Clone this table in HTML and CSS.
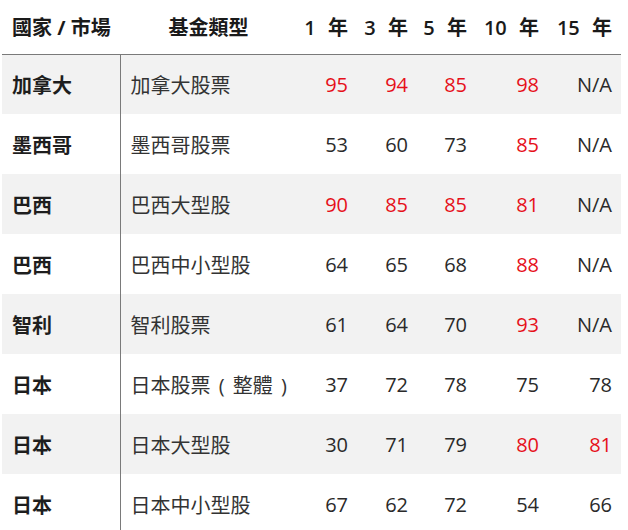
FILE: index.html
```html
<!DOCTYPE html>
<html lang="zh-Hant">
<head>
<meta charset="utf-8">
<link rel="stylesheet" href="styles.css">
</head>
<body>
<table class="funds">
  <colgroup>
    <col class="c-country"><col class="c-type"><col class="c-y1"><col class="c-y3"><col class="c-y5"><col class="c-y10"><col class="c-y15">
  </colgroup>
  <thead>
    <tr>
      <th class="country">國家 / 市場</th>
      <th class="type-h">基金類型</th>
      <th class="num">1 年</th>
      <th class="num">3 年</th>
      <th class="num">5 年</th>
      <th class="num">10 年</th>
      <th class="num">15 年</th>
    </tr>
  </thead>
  <tbody>
    <tr class="shade">
      <td class="country">加拿大</td><td class="type">加拿大股票</td>
      <td class="num hi">95</td><td class="num hi">94</td><td class="num hi">85</td><td class="num hi">98</td><td class="num">N/A</td>
    </tr>
    <tr>
      <td class="country">墨西哥</td><td class="type">墨西哥股票</td>
      <td class="num">53</td><td class="num">60</td><td class="num">73</td><td class="num hi">85</td><td class="num">N/A</td>
    </tr>
    <tr class="shade">
      <td class="country">巴西</td><td class="type">巴西大型股</td>
      <td class="num hi">90</td><td class="num hi">85</td><td class="num hi">85</td><td class="num hi">81</td><td class="num">N/A</td>
    </tr>
    <tr>
      <td class="country">巴西</td><td class="type">巴西中小型股</td>
      <td class="num">64</td><td class="num">65</td><td class="num">68</td><td class="num hi">88</td><td class="num">N/A</td>
    </tr>
    <tr class="shade">
      <td class="country">智利</td><td class="type">智利股票</td>
      <td class="num">61</td><td class="num">64</td><td class="num">70</td><td class="num hi">93</td><td class="num">N/A</td>
    </tr>
    <tr>
      <td class="country">日本</td><td class="type">日本股票 ( 整體 )</td>
      <td class="num">37</td><td class="num">72</td><td class="num">78</td><td class="num">75</td><td class="num">78</td>
    </tr>
    <tr class="shade">
      <td class="country">日本</td><td class="type">日本大型股</td>
      <td class="num">30</td><td class="num">71</td><td class="num">79</td><td class="num hi">80</td><td class="num hi">81</td>
    </tr>
    <tr>
      <td class="country">日本</td><td class="type">日本中小型股</td>
      <td class="num">67</td><td class="num">62</td><td class="num">72</td><td class="num">54</td><td class="num">66</td>
    </tr>
  </tbody>
</table>
</body>
</html>
```
FILE: styles.css
```css
html, body {
  margin: 0;
  padding: 0;
  background: #ffffff;
}
body {
  font-family: "Open Sans", "Noto Sans CJK TC", sans-serif;
  font-size: 20px;
  color: #2a2a2a;
  overflow: hidden;
}
.funds {
  margin-left: 2px;
  width: 619px;
  border-collapse: collapse;
  table-layout: fixed;
}
.c-country { width: 118px; }
.c-type { width: 177px; }
.c-y1 { width: 60px; }
.c-y3 { width: 60px; }
.c-y5 { width: 59px; }
.c-y10 { width: 72px; }
.c-y15 { width: 73px; }

.funds th, .funds td {
  padding: 0;
  vertical-align: middle;
  white-space: nowrap;
}
.funds thead tr {
  height: 54px;
}
.funds thead th {
  font-weight: 700;
  color: #1a1a1a;
  border-bottom: 1px solid #7a7a7a;
}
.funds thead th.num {
  font-weight: 600;
  word-spacing: 7px;
}
.funds tbody tr {
  height: 60px;
}
.funds tbody tr.shade {
  background: #f2f2f2;
}
.funds .country {
  text-align: left;
  padding-left: 10px;
}
.funds td.country {
  font-weight: 700;
  color: #1e1e1e;
  border-right: 1px solid #7a7a7a;
}
.funds .type-h {
  text-align: center;
}
.funds td.type {
  padding-left: 10px;
  text-align: left;
  color: #333333;
  word-spacing: 3px;
}
.funds .num {
  text-align: right;
  padding-right: 9px;
}
.funds td.num {
  color: #2a2a2a;
}
.funds td.hi {
  color: #e6101a;
  font-weight: 500;
}
```
